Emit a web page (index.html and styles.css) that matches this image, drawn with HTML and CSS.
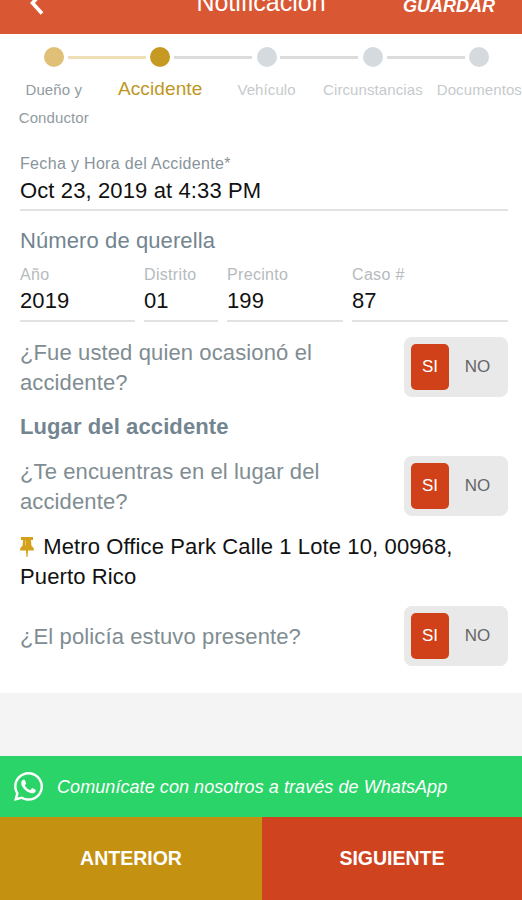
FILE: index.html
```html
<!DOCTYPE html>
<html lang="es">

<head>
    <meta charset="UTF-8">
    <meta name="viewport" content="width=device-width, initial-scale=1.0">
    <title>Notificación</title>
    <link rel="stylesheet" href="styles.css">
</head>

<body>
    <header class="header">
        <button class="back" aria-label="Atrás">
            <svg width="20" height="30" viewBox="0 0 20 30"><path d="M16 3.500 L6.500 14 L16 24.500" fill="none" stroke="#fff" stroke-width="3.600"/></svg>
        </button>
        <h1 class="header_title">Notificación</h1>
        <button class="save">GUARDAR</button>
    </header>

    <main class="content">
        <ol class="steps">
            <li class="step done"><span class="dot"></span><span class="step_name">Dueño y Conductor</span></li>
            <li class="step active"><span class="dot"></span><span class="step_name">Accidente</span></li>
            <li class="step"><span class="dot"></span><span class="step_name">Vehículo</span></li>
            <li class="step"><span class="dot"></span><span class="step_name">Circunstancias</span></li>
            <li class="step"><span class="dot"></span><span class="step_name">Documentos</span></li>
        </ol>

        <div class="form">
            <div class="field date">
                <span class="label">Fecha y Hora del Accidente*</span>
                <span class="value">Oct 23, 2019 at 4:33 PM</span>
            </div>

            <h2 class="subtitle">Número de querella</h2>
            <div class="complaint">
                <div class="field"><span class="label">Año</span><span class="value">2019</span></div>
                <div class="field"><span class="label">Distrito</span><span class="value">01</span></div>
                <div class="field"><span class="label">Precinto</span><span class="value">199</span></div>
                <div class="field"><span class="label">Caso #</span><span class="value">87</span></div>
            </div>

            <div class="question">
                <p class="question_text">¿Fue usted quien ocasionó el accidente?</p>
                <div class="toggle"><button class="option selected">SI</button><button class="option">NO</button></div>
            </div>

            <h2 class="subtitle place">Lugar del accidente</h2>
            <div class="question">
                <p class="question_text">¿Te encuentras en el lugar del accidente?</p>
                <div class="toggle"><button class="option selected">SI</button><button class="option">NO</button></div>
            </div>

            <p class="address">
                <svg class="pin" width="14" height="20" viewBox="0 0 14 20"><path d="M1 0 H13 V3 H11 L11.500 9 Q14 10 14 13.500 H8 L7.500 20 H6.500 L6 13.500 H0 Q0 10 2.500 9 L3 3 H1 Z" fill="#d3a11c"/><path d="M5.500 3.500 V8.500" stroke="#e8c866" stroke-width="1"/></svg>
                Metro Office Park Calle 1 Lote 10, 00968, Puerto Rico
            </p>

            <div class="question police">
                <p class="question_text">¿El policía estuvo presente?</p>
                <div class="toggle"><button class="option selected">SI</button><button class="option">NO</button></div>
            </div>
        </div>
    </main>

    <footer class="footer">
        <div class="whatsapp">
            <svg class="whatsapp_icon" width="29" height="29" viewBox="0 32 448 448"><path fill="#fff" d="M380.900 97.100C339 55.100 283.200 32 223.900 32c-122.400 0-222 99.600-222 222 0 39.100 10.200 77.300 29.600 111L0 480l117.700-30.900c32.400 17.700 68.900 27 106.100 27h.1c122.300 0 224.100-99.600 224.100-222 0-59.300-25.200-115-67.100-157zm-157 341.600c-33.200 0-65.700-8.900-94-25.700l-6.700-4-69.800 18.300L72 359.200l-4.400-7c-18.500-29.400-28.200-63.300-28.200-98.200 0-101.700 82.800-184.500 184.600-184.500 49.300 0 95.600 19.200 130.400 54.100 34.800 34.900 56.200 81.200 56.100 130.500 0 101.800-84.900 184.600-186.600 184.600zm101.200-138.200c-5.500-2.800-32.800-16.200-37.900-18-5.100-1.900-8.800-2.800-12.500 2.800-3.700 5.600-14.300 18-17.600 21.800-3.200 3.700-6.500 4.200-12 1.400-32.600-16.300-54-29.100-75.500-66-5.700-9.800 5.700-9.100 16.300-30.300 1.800-3.700.9-6.900-.5-9.700-1.400-2.800-12.500-30.100-17.100-41.200-4.500-10.800-9.100-9.300-12.500-9.500-3.200-.2-6.900-.2-10.600-.2-3.700 0-9.700 1.400-14.800 6.900-5.100 5.600-19.400 19-19.400 46.300 0 27.300 19.900 53.700 22.600 57.400 2.800 3.700 39.100 59.700 94.800 83.800 35.200 15.200 49 16.500 66.600 13.900 10.700-1.600 32.800-13.400 37.400-26.400 4.600-13 4.600-24.100 3.200-26.400-1.300-2.500-5-3.900-10.500-6.600z"/></svg>
            <span class="whatsapp_text">Comunícate con nosotros a través de WhatsApp</span>
        </div>
        <div class="nav">
            <button class="nav_button prev">ANTERIOR</button>
            <button class="nav_button next">SIGUIENTE</button>
        </div>
    </footer>
</body>

</html>
```

FILE: styles.css
```css
* {
    box-sizing: border-box;
}

body {
    margin: 0;
    height: 100vh;
    display: flex;
    flex-direction: column;
    overflow: hidden;
    background-color: #f4f4f4;
    color: #111;
    font-family: "Liberation Sans", Arial, sans-serif;
}

h1, h2, p, ol {
    margin: 0;
    padding: 0;
}

button {
    border: 0;
    padding: 0;
    background: none;
    color: #fff;
    font-family: inherit;
    cursor: pointer;
}

/* la barra queda parcialmente desplazada hacia arriba */
.header {
    flex: none;
    display: grid;
    grid-template-columns: 1fr auto 1fr;
    align-items: center;
    height: 64px;
    margin-top: -30px;
    padding: 0 26px;
    background-color: #da5734;
    color: #fff;
}

.back {
    justify-self: start;
    height: 30px;
    padding-top: 2px;
}

.header_title {
    padding-top: 1px;
    font-size: 25px;
    font-weight: normal;
}

.save {
    justify-self: end;
    padding-top: 8px;
    padding-right: 1px;
    font-size: 18px;
    font-weight: bold;
    font-style: italic;
}

.content {
    flex: none;
    height: 659px;
    background-color: #fff;
}

.steps {
    display: grid;
    grid-template-columns: repeat(5, 106.4px);
    height: 116px;
    padding-top: 13px;
    padding-left: .6px;
    list-style: none;
    color: #c6cacc;
    font-size: 15px;
    line-height: 28px;
    text-align: center;
}

.step {
    position: relative;
}

.step::after {
    content: "";
    position: absolute;
    top: 9px;
    left: 67px;
    width: 78px;
    height: 3px;
    background-color: #dcdcdf;
}

.step:last-child::after {
    display: none;
}

.dot {
    display: block;
    width: 20px;
    height: 20px;
    margin: 0 auto 9px;
    border-radius: 50%;
    background-color: #d5dadf;
}

.step_name {
    display: block;
    margin: 0 -4px;
    letter-spacing: .1px;
}

.done {
    color: #919ba1;
}

.done .step_name {
    padding: 0 14px;
}

.done .dot {
    background-color: #e0bf77;
}

.done::after {
    background-color: #eedfb6;
}

.active {
    color: #bd9724;
    font-size: 19px;
}

.active .step_name {
    margin-top: -1px;
}

.active .dot {
    background-color: #c69a22;
}

.form {
    padding: 0 14px 0 20px;
}

.field {
    display: flex;
    flex-direction: column;
    height: 57px;
    border-bottom: 2px solid #e2e2e2;
}

.label {
    color: #b5babd;
    font-size: 16px;
    line-height: 20px;
    letter-spacing: .33px;
}

.value {
    font-size: 22px;
    line-height: 32px;
    letter-spacing: .12px;
}

.date {
    height: 57px;
    margin-top: 4px;
}

.date .label {
    color: #88949a;
}

.date .value {
    line-height: 34px;
}

.subtitle {
    margin-top: 16px;
    color: #738590;
    font-size: 22px;
    font-weight: normal;
    line-height: 28px;
    letter-spacing: .1px;
}

.complaint {
    display: grid;
    grid-template-columns: 115px 74px 116px 1fr;
    gap: 9px;
    margin-top: 10px;
}

.question {
    display: flex;
    align-items: center;
    justify-content: space-between;
    margin-top: 15px;
    height: 60px;
}

.question_text {
    width: 320px;
    padding-top: 2px;
    color: #7f8d92;
    font-size: 22px;
    line-height: 30px;
    letter-spacing: .12px;
}

.toggle {
    display: flex;
    width: 104px;
    height: 60px;
    padding: 7px;
    border-radius: 8px;
    background-color: #e9e9e9;
}

.option {
    flex: none;
    width: 57px;
    color: #666;
    font-size: 17px;
}

.option.selected {
    width: 38px;
    border-radius: 5px;
    background-color: #d04019;
    color: #fff;
}

.place {
    margin-top: 16px;
    font-weight: bold;
}

.address {
    margin-top: 16px;
    font-size: 22px;
    line-height: 30px;
    letter-spacing: .12px;
}

.pin {
    margin-right: 3px;
    vertical-align: -3px;
}

.police {
    margin-top: 14px;
}

.footer {
    margin-top: auto;
}

.whatsapp {
    display: flex;
    align-items: center;
    height: 61px;
    padding-left: 14px;
    background-color: #2ad468;
    color: #fff;
    font-size: 18px;
    font-style: italic;
}

.whatsapp_icon {
    margin-right: 14px;
}

.whatsapp_text {
    padding-top: 2px;
    letter-spacing: .07px;
}

.nav {
    display: flex;
    height: 83px;
}

.nav_button {
    width: 262px;
    font-size: 19.5px;
    font-weight: bold;
}

.prev {
    background-color: #c49111;
}

.next {
    width: 260px;
    background-color: #d0431f;
}
```
